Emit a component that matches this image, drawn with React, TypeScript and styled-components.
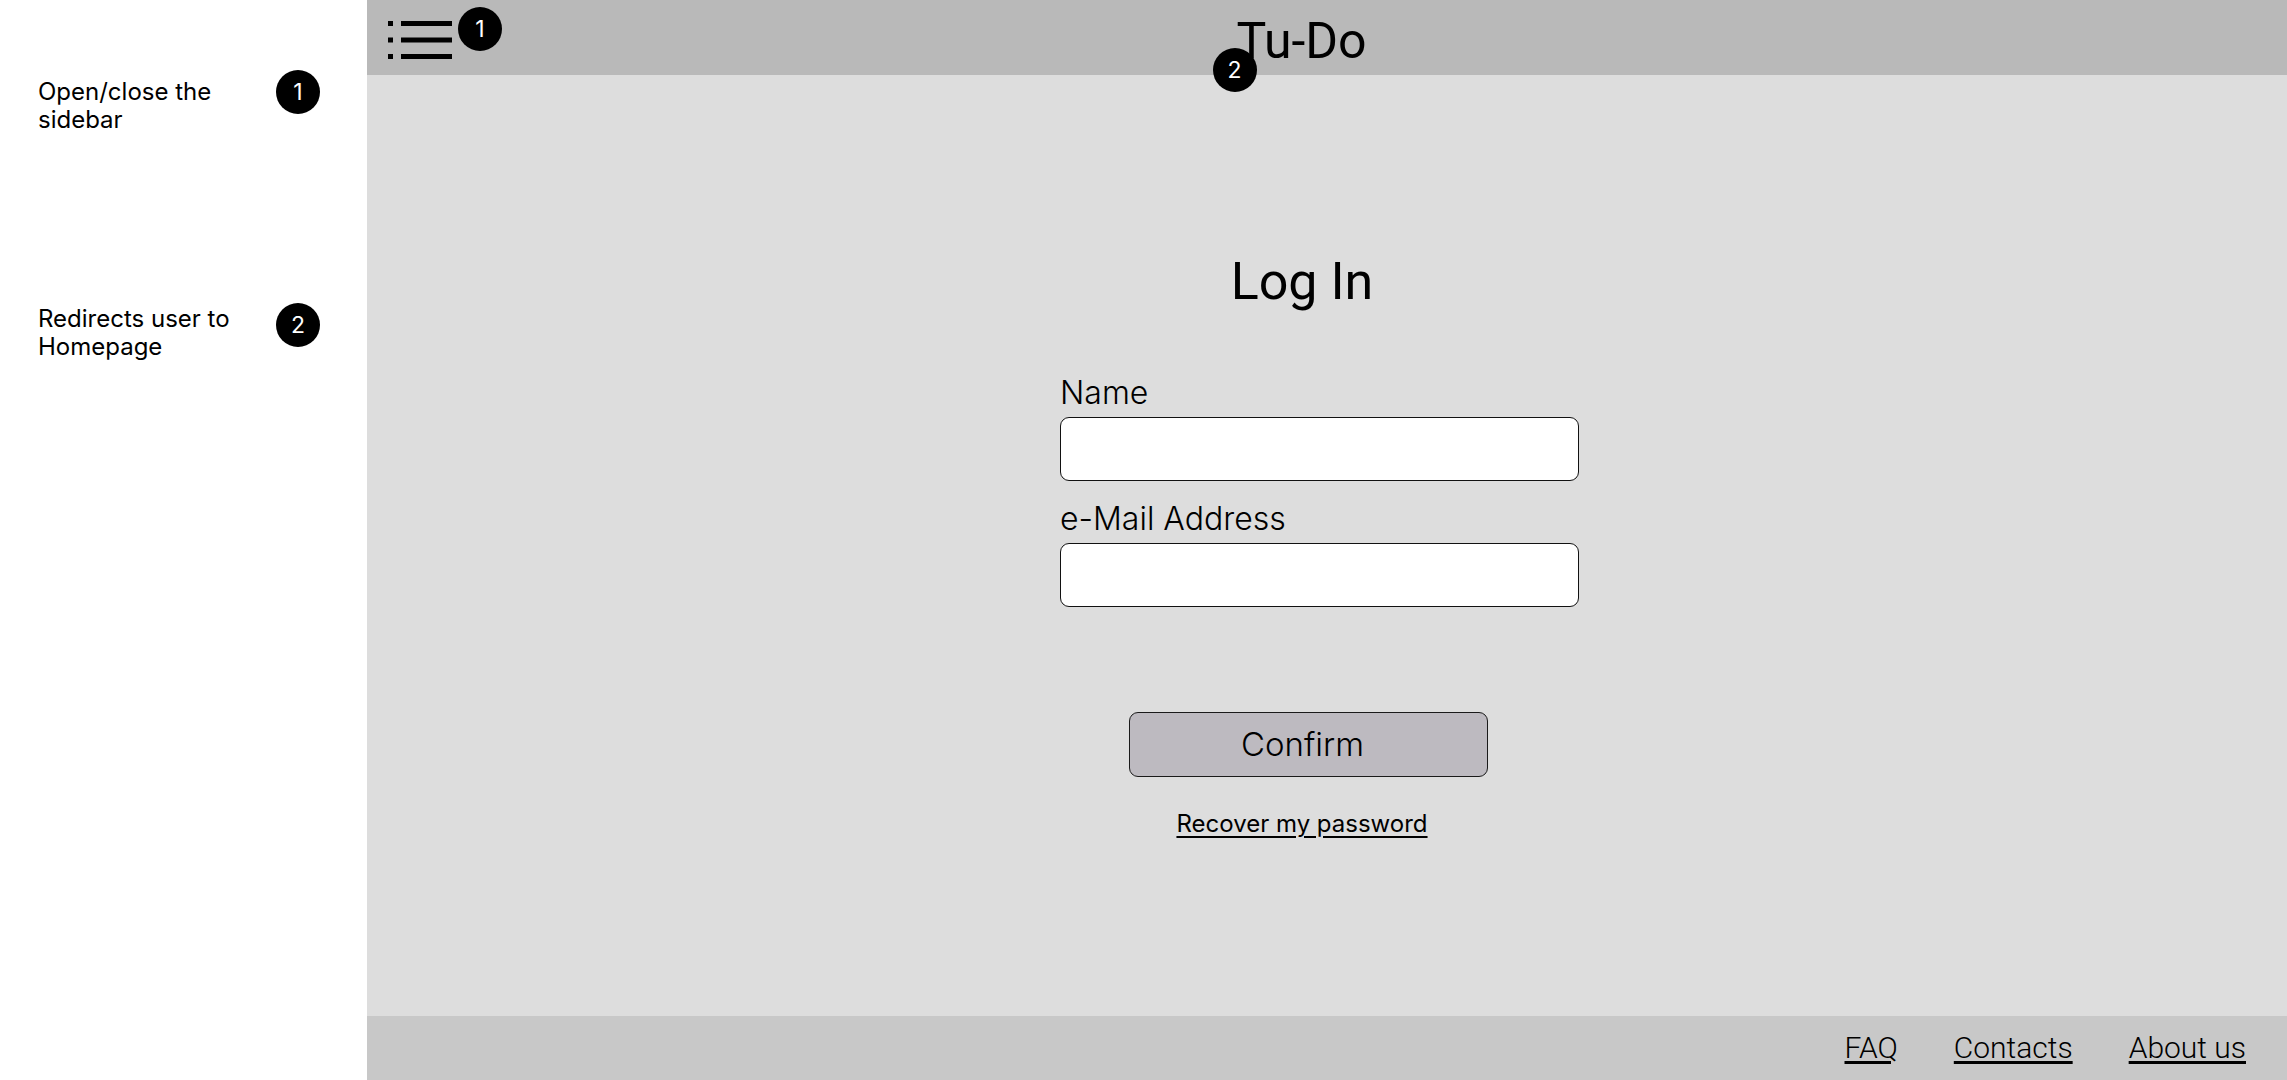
import React from "react";
import styled, { createGlobalStyle } from "styled-components";

const GlobalStyle = createGlobalStyle`
  html, body { margin: 0; padding: 0; }
  body { font-family: Inter, "Noto Sans", sans-serif; color: #000; background: #fff; }
  * { box-sizing: border-box; }
`;

const Page = styled.div`
  display: flex;
  width: 2287px;
  height: 1080px;
  overflow: hidden;
  background: #fff;
`;

const Sidebar = styled.aside`
  width: 367px;
  flex: none;
  background: #fff;
  padding: 70px 0 0 38px;
  display: flex;
  flex-direction: column;
  gap: 169px;
`;

const Note = styled.div`
  display: flex;
  align-items: flex-start;
`;

const NoteText = styled.p<{ $offset: number }>`
  margin: ${(p) => p.$offset}px 0 0;
  width: 206px;
  font: 400 24px/28px Inter, sans-serif;
`;

const Badge = styled.span`
  width: 44px;
  height: 44px;
  border-radius: 50%;
  background: #000;
  color: #fff;
  display: flex;
  align-items: center;
  justify-content: center;
  font: 400 23px/1 Inter, sans-serif;
  flex: none;
`;

const NoteBadge = styled(Badge)`
  margin-left: 32px;
`;

const OverlayBadge = styled(Badge)<{ $left: string; $top: number }>`
  position: absolute;
  left: ${(p) => p.$left};
  top: ${(p) => p.$top}px;
`;

const Main = styled.main`
  flex: 1;
  display: flex;
  flex-direction: column;
  background: #dddddd;
`;

const Header = styled.header`
  height: 75px;
  flex: none;
  background: #b9b9b9;
  display: grid;
  grid-template-columns: 1fr auto 1fr;
  padding: 0 72px 0 21px;
`;

const MenuButton = styled.button`
  position: relative;
  justify-self: start;
  align-self: start;
  margin-top: 20px;
  width: 64px;
  height: 40px;
  padding: 0;
  border: none;
  background: none;
  cursor: pointer;
  svg { display: block; }
`;

const Title = styled.h1`
  position: relative;
  align-self: start;
  margin: 16px 0 0;
  font: 400 50px/50px Roboto, sans-serif;
  color: #000;
`;

const Content = styled.section`
  flex: 1;
  display: flex;
  flex-direction: column;
  align-items: center;
  padding: 181px 50px 0 0;
`;

const Heading = styled.h2`
  margin: 0;
  font: 400 52px/52px Roboto, sans-serif;
`;

const Form = styled.form`
  width: 519px;
  margin: 69px 0 0 35px;
  display: flex;
  flex-direction: column;
`;

const Label = styled.label<{ $spaced?: boolean }>`
  display: block;
  margin: ${(p) => (p.$spaced ? "22px" : "0")} 0 9px;
  font: 300 32px/31px "Inter Light", Inter, sans-serif;
`;

const Input = styled.input`
  width: 100%;
  height: 64px;
  background: #fff;
  border: 1px solid #111;
  border-radius: 9px;
  padding: 0 16px;
  font: 400 22px Inter, sans-serif;
  outline: none;
`;

const ConfirmButton = styled.button`
  width: 359px;
  height: 65px;
  margin: 105px 0 0 13px;
  padding: 0 12px 0 0;
  background: #bdbac0;
  border: 1px solid #1a1a1a;
  border-radius: 9px;
  font: 300 33px/1 "Inter Light", Inter, sans-serif;
  color: #000;
  cursor: pointer;
`;

const RecoverLink = styled.a`
  margin-top: 35px;
  font: 400 24px/23px Inter, sans-serif;
  color: #000;
  text-decoration: underline;
  text-underline-offset: 4px;
`;

const Footer = styled.footer`
  height: 64px;
  flex: none;
  background: #c8c8c8;
  display: flex;
  justify-content: flex-end;
  align-items: center;
  gap: 56px;
  padding-right: 41px;
`;

const FooterLink = styled.a`
  font: 300 30px/30px Roboto, sans-serif;
  color: #000;
  text-decoration: underline;
  text-underline-offset: 3px;
`;

const MenuIcon = () => (
  <svg width="64" height="40" viewBox="0 0 64 40" aria-hidden="true">
    <rect x="0" y="1" width="5" height="5" fill="#000" />
    <rect x="13" y="1" width="51" height="5" fill="#000" />
    <rect x="0" y="17.5" width="5" height="5" fill="#000" />
    <rect x="13" y="17.5" width="51" height="5" fill="#000" />
    <rect x="0" y="34" width="5" height="5" fill="#000" />
    <rect x="13" y="34" width="51" height="5" fill="#000" />
  </svg>
);

export default function App() {
  return (
    <>
      <GlobalStyle />
      <Page>
        <Sidebar>
          <Note>
            <NoteText $offset={8}>Open/close the sidebar</NoteText>
            <NoteBadge>1</NoteBadge>
          </Note>
          <Note>
            <NoteText $offset={2}>Redirects user to Homepage</NoteText>
            <NoteBadge>2</NoteBadge>
          </Note>
        </Sidebar>
        <Main>
          <Header>
            <MenuButton type="button" aria-label="Open sidebar">
              <MenuIcon />
              <OverlayBadge $left="70px" $top={-13}>1</OverlayBadge>
            </MenuButton>
            <Title>
              Tu-Do
              <OverlayBadge $left="calc(50% - 89px)" $top={32}>2</OverlayBadge>
            </Title>
            <span />
          </Header>
          <Content>
            <Heading>Log In</Heading>
            <Form onSubmit={(e) => e.preventDefault()}>
              <Label htmlFor="name">Name</Label>
              <Input id="name" type="text" />
              <Label htmlFor="email" $spaced>e-Mail Address</Label>
              <Input id="email" type="email" />
            </Form>
            <ConfirmButton type="button">Confirm</ConfirmButton>
            <RecoverLink href="#">Recover my password</RecoverLink>
          </Content>
          <Footer>
            <FooterLink href="#">FAQ</FooterLink>
            <FooterLink href="#">Contacts</FooterLink>
            <FooterLink href="#">About us</FooterLink>
          </Footer>
        </Main>
      </Page>
    </>
  );
}
